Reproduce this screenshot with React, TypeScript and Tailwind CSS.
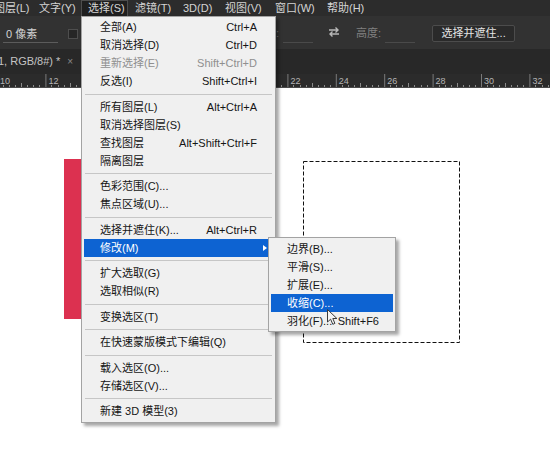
import React from "react";

type MenuItem =
  | { label: string; shortcut?: string; disabled?: boolean; active?: boolean; sub?: boolean }
  | { sep: 7 | 8 };

const TOP_MENUS: { label: string; w: string; open?: boolean }[] = [
  { label: "图层(L)", w: "w-[45px]" },
  { label: "文字(Y)", w: "w-[49px]" },
  { label: "选择(S)", w: "w-[47px]", open: true },
  { label: "滤镜(T)", w: "w-[48px]" },
  { label: "3D(D)", w: "w-[42px]" },
  { label: "视图(V)", w: "w-[50px]" },
  { label: "窗口(W)", w: "w-[52px]" },
  { label: "帮助(H)", w: "w-[52px]" },
];

const SELECT_MENU: MenuItem[] = [
  { label: "全部(A)", shortcut: "Ctrl+A" },
  { label: "取消选择(D)", shortcut: "Ctrl+D" },
  { label: "重新选择(E)", shortcut: "Shift+Ctrl+D", disabled: true },
  { label: "反选(I)", shortcut: "Shift+Ctrl+I" },
  { sep: 8 },
  { label: "所有图层(L)", shortcut: "Alt+Ctrl+A" },
  { label: "取消选择图层(S)" },
  { label: "查找图层", shortcut: "Alt+Shift+Ctrl+F" },
  { label: "隔离图层" },
  { sep: 7 },
  { label: "色彩范围(C)..." },
  { label: "焦点区域(U)..." },
  { sep: 8 },
  { label: "选择并遮住(K)...", shortcut: "Alt+Ctrl+R" },
  { label: "修改(M)", active: true, sub: true },
  { sep: 7 },
  { label: "扩大选取(G)" },
  { label: "选取相似(R)" },
  { sep: 8 },
  { label: "变换选区(T)" },
  { sep: 7 },
  { label: "在快速蒙版模式下编辑(Q)" },
  { sep: 8 },
  { label: "载入选区(O)..." },
  { label: "存储选区(V)..." },
  { sep: 7 },
  { label: "新建 3D 模型(3)" },
];

const MODIFY_MENU: MenuItem[] = [
  { label: "边界(B)..." },
  { label: "平滑(S)..." },
  { label: "扩展(E)..." },
  { label: "收缩(C)...", active: true },
  { label: "羽化(F)...", shortcut: "Shift+F6" },
];

function MenuRows({ items, pr }: { items: MenuItem[]; pr: string }) {
  return (
    <>
      {items.map((item, i) => {
        if ("sep" in item) {
          return (
            <div
              key={i}
              className={`${item.sep === 8 ? "h-[8px]" : "h-[7px]"} flex items-center px-[1px]`}
            >
              <div className="w-full border-t border-[#c6c6c6]" />
            </div>
          );
        }
        return (
          <div
            key={i}
            className={`h-[18px] flex items-center justify-between whitespace-nowrap pl-[16px] ${pr} ${
              item.active ? "bg-[#0d63d2] text-white" : item.disabled ? "text-[#8f8f8f]" : "text-[#151515]"
            }`}
          >
            <span>{item.label}</span>
            {item.shortcut && <span>{item.shortcut}</span>}
            {item.sub && (
              <span className="ml-auto mr-[-10px] w-0 h-0 border-l-[4px] border-l-white border-y-[3px] border-y-transparent" />
            )}
          </div>
        );
      })}
    </>
  );
}

function Ruler() {
  const majors = Array.from({ length: 13 }, (_, k) => ({ x: -3 + 48.4 * k, n: 10 + 2 * k }));
  return (
    <svg width="550" height="14" className="block">
      {majors.map((m) => (
        <g key={m.n}>
          <line x1={m.x + 0.5} y1="0" x2={m.x + 0.5} y2="14" stroke="#7a7a7a" strokeWidth="1" />
          {/* labels under the open menu are not drawn */}
          {(m.x < 80 || m.x > 276) && (
            <text x={m.x + 3} y="10" fontSize="9" fill="#b4b4b4" fontFamily="Liberation Sans, sans-serif">
              {m.n}
            </text>
          )}
          {Array.from({ length: 7 }, (_, i) => {
            const x = Math.round(m.x + (i + 1) * 6.05) + 0.5;
            const h = i === 3 ? 4 : 2;
            return <line key={i} x1={x} y1={13 - h} x2={x} y2="13" stroke="#8a8a8a" strokeWidth="1" />;
          })}
        </g>
      ))}
      <line x1="0" y1="13.5" x2="550" y2="13.5" stroke="#4a4a4a" />
    </svg>
  );
}

export default function App() {
  return (
    <div className="relative w-[550px] h-[470px] overflow-hidden bg-white font-['Liberation_Sans','Noto_Sans_CJK_SC',sans-serif] text-[11px] leading-none whitespace-nowrap">
      {/* Menu bar */}
      <div className="h-[16px] bg-[#2c2c2c] flex items-stretch text-[#d4d4d4]">
        <div className="flex ml-[-13px] shrink-0">
          {TOP_MENUS.map((m) => (
            <div
              key={m.label}
              className={`${m.w} shrink-0 flex items-center ${
                m.open ? "bg-[#1f1f1f] border border-b-0 border-[#4d4d4d] px-[6px]" : "px-[7px]"
              }`}
            >
              {m.label}
            </div>
          ))}
        </div>
      </div>

      {/* Options bar */}
      <div className="h-[33px] bg-[#323232] flex items-center pt-[4px] text-[#d2d2d2]">
        <div className="shrink-0 ml-[3px] w-[55px] h-[16px] flex items-center pl-[3px] border-b border-[#5c5c5c]">0 像素</div>
        <div className="shrink-0 ml-[10px] w-[10px] h-[10px] bg-[#262626] border border-[#4e4e4e] mb-[2px]" />
        <div className="shrink-0 ml-[198px] text-[#7c7c7c] mb-[2px]">:</div>
        <div className="shrink-0 ml-[4px] w-[30px] h-[16px] border-b border-[#4a4a4a]" />
        <svg width="12" height="10" viewBox="0 0 12 10" className="shrink-0 ml-[15px] mb-[6px]">
          <path d="M1 3h9M7.5 0.5L10 3 7.5 5.5" fill="none" stroke="#b8b8b8" strokeWidth="1.4" />
          <path d="M11 7H2M4.5 4.5L2 7l2.5 2.5" fill="none" stroke="#b8b8b8" strokeWidth="1.4" />
        </svg>
        <div className="shrink-0 ml-[16px] text-[#808080] mb-[2px]">高度:</div>
        <div className="shrink-0 ml-[4px] w-[30px] h-[16px] border-b border-[#4a4a4a]" />
        <div className="shrink-0 ml-[17px] w-[83px] h-[17px] mb-[2px] flex items-center justify-center rounded-[2px] bg-[#2a2a2a] border border-[#4c4c4c] text-[#e4e4e4]">
          选择并遮住...
        </div>
      </div>

      {/* Document tab */}
      <div className="h-[25px] bg-[#282828] flex items-center text-[#c4c4c4]">
        <span className="ml-[-2px]">1, RGB/8#) *</span>
        <span className="ml-[7px] text-[#8a8a8a] text-[10px]">×</span>
      </div>

      {/* Ruler */}
      <div className="h-[14px] bg-[#2b2b2b]">
        <Ruler />
      </div>

      {/* Canvas */}
      <div className="relative h-[382px] bg-white">
        <div className="absolute left-[64px] top-[71px] w-[40px] h-[160px] bg-[#dc3150]" />
        <svg className="absolute left-[303px] top-[73px]" width="157" height="182">
          <rect x="0.5" y="0.5" width="156" height="181" fill="none" stroke="#111" strokeWidth="1" strokeDasharray="4 2" />
        </svg>
      </div>

      {/* 选择 menu */}
      <div className="absolute left-[81px] top-[16px] w-[195px] bg-[#f0f0f0] border border-[#a3a3a3] pt-[1px] pb-[2px] px-[2px] shadow-[3px_3px_3px_rgba(0,0,0,0.35)]">
        <MenuRows items={SELECT_MENU} pr="pr-[16px]" />
      </div>

      {/* 修改 submenu */}
      <div className="absolute left-[268px] top-[237px] w-[128px] bg-[#f0f0f0] border border-[#a3a3a3] pt-[2px] pb-[1px] px-[2px] shadow-[3px_3px_3px_rgba(0,0,0,0.35)]">
        <MenuRows items={MODIFY_MENU} pr="pr-[14px]" />
      </div>

      {/* Mouse pointer */}
      <svg className="absolute left-[327px] top-[309px]" width="12" height="17" viewBox="0 0 12 17">
        <path
          d="M0.5 0.5V13L3.6 10.2 5.8 15.3 7.9 14.4 5.8 9.5H9.9Z"
          fill="#f4f4f4"
          stroke="#3a3a3a"
          strokeWidth="1"
          strokeLinejoin="round"
        />
      </svg>
    </div>
  );
}
